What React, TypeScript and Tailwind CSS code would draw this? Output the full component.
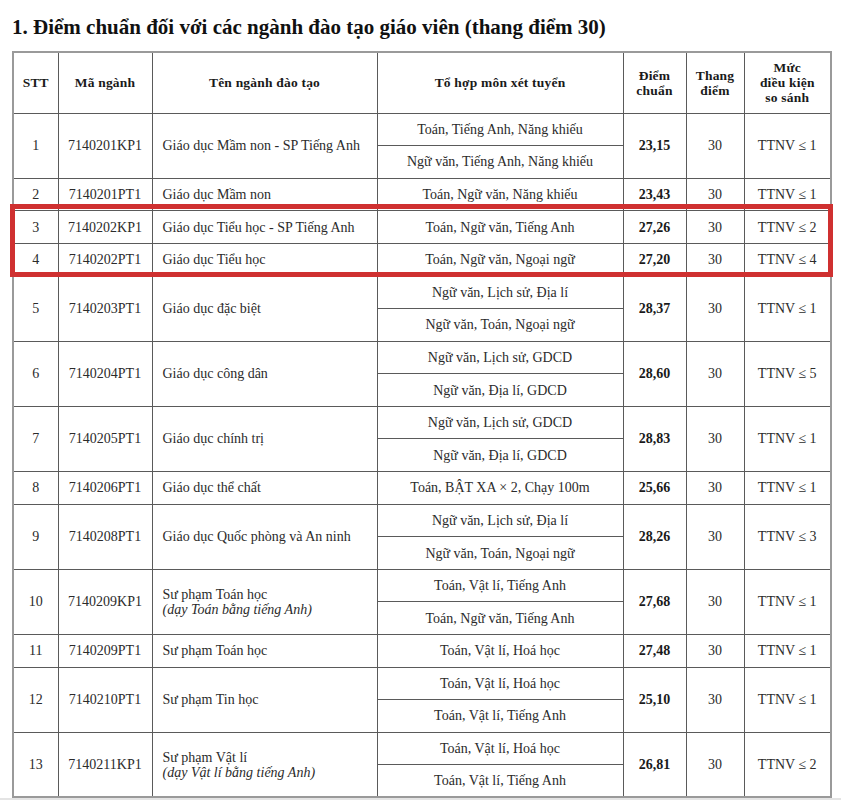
type Row = {
  stt: number;
  code: string;
  name: string;
  note?: string;
  combos: string[];
  score: string;
  cond: string;
};

const rows: Row[] = [
  { stt: 1, code: '7140201KP1', name: 'Giáo dục Mầm non - SP Tiếng Anh', combos: ['Toán, Tiếng Anh, Năng khiếu', 'Ngữ văn, Tiếng Anh, Năng khiếu'], score: '23,15', cond: 'TTNV ≤ 1' },
  { stt: 2, code: '7140201PT1', name: 'Giáo dục Mầm non', combos: ['Toán, Ngữ văn, Năng khiếu'], score: '23,43', cond: 'TTNV ≤ 1' },
  { stt: 3, code: '7140202KP1', name: 'Giáo dục Tiểu học - SP Tiếng Anh', combos: ['Toán, Ngữ văn, Tiếng Anh'], score: '27,26', cond: 'TTNV ≤ 2' },
  { stt: 4, code: '7140202PT1', name: 'Giáo dục Tiểu học', combos: ['Toán, Ngữ văn, Ngoại ngữ'], score: '27,20', cond: 'TTNV ≤ 4' },
  { stt: 5, code: '7140203PT1', name: 'Giáo dục đặc biệt', combos: ['Ngữ văn, Lịch sử, Địa lí', 'Ngữ văn, Toán, Ngoại ngữ'], score: '28,37', cond: 'TTNV ≤ 1' },
  { stt: 6, code: '7140204PT1', name: 'Giáo dục công dân', combos: ['Ngữ văn, Lịch sử, GDCD', 'Ngữ văn, Địa lí, GDCD'], score: '28,60', cond: 'TTNV ≤ 5' },
  { stt: 7, code: '7140205PT1', name: 'Giáo dục chính trị', combos: ['Ngữ văn, Lịch sử, GDCD', 'Ngữ văn, Địa lí, GDCD'], score: '28,83', cond: 'TTNV ≤ 1' },
  { stt: 8, code: '7140206PT1', name: 'Giáo dục thể chất', combos: ['Toán, BẬT XA × 2, Chạy 100m'], score: '25,66', cond: 'TTNV ≤ 1' },
  { stt: 9, code: '7140208PT1', name: 'Giáo dục Quốc phòng và An ninh', combos: ['Ngữ văn, Lịch sử, Địa lí', 'Ngữ văn, Toán, Ngoại ngữ'], score: '28,26', cond: 'TTNV ≤ 3' },
  { stt: 10, code: '7140209KP1', name: 'Sư phạm Toán học', note: '(dạy Toán bằng tiếng Anh)', combos: ['Toán, Vật lí, Tiếng Anh', 'Toán, Ngữ văn, Tiếng Anh'], score: '27,68', cond: 'TTNV ≤ 1' },
  { stt: 11, code: '7140209PT1', name: 'Sư phạm Toán học', combos: ['Toán, Vật lí, Hoá học'], score: '27,48', cond: 'TTNV ≤ 1' },
  { stt: 12, code: '7140210PT1', name: 'Sư phạm Tin học', combos: ['Toán, Vật lí, Hoá học', 'Toán, Vật lí, Tiếng Anh'], score: '25,10', cond: 'TTNV ≤ 1' },
  { stt: 13, code: '7140211KP1', name: 'Sư phạm Vật lí', note: '(dạy Vật lí bằng tiếng Anh)', combos: ['Toán, Vật lí, Hoá học', 'Toán, Vật lí, Tiếng Anh'], score: '26,81', cond: 'TTNV ≤ 2' },
];

const cell = 'border border-[#5a5a5a] align-middle p-0';
const th = 'border border-[#5a5a5a] align-middle p-0 text-center font-bold text-[13.5px] leading-[15px] tracking-[0.2px] text-[#1a1a1a]';

export default function App() {
  return (
    <div
      className="relative w-[841px] h-[809px] bg-white overflow-hidden text-[#2b2b2b]"
      style={{ fontFamily: '"Liberation Serif", "Times New Roman", serif' }}
    >
      <div className="pl-[12px] pt-[15px]">
        <h1 className="text-[21px] leading-[24px] font-bold text-[#111] mb-[12px] whitespace-nowrap">
          1. Điểm chuẩn đối với các ngành đào tạo giáo viên (thang điểm 30)
        </h1>

        <table className="table-fixed border-collapse w-[818px] border-2 border-[#9a9a9a] text-[14px] leading-[15px]">
          <colgroup>
            <col className="w-[45px]" />
            <col className="w-[94px]" />
            <col className="w-[225px]" />
            <col className="w-[246px]" />
            <col className="w-[63px]" />
            <col className="w-[58px]" />
            <col className="w-[87px]" />
          </colgroup>
          <thead>
            <tr className="h-[61px]">
              <th className={th}>STT</th>
              <th className={th}>Mã ngành</th>
              <th className={th}>Tên ngành đào tạo</th>
              <th className={th}>Tổ hợp môn xét tuyển</th>
              <th className={th}>
                Điểm
                <br />
                chuẩn
              </th>
              <th className={th}>
                Thang
                <br />
                điểm
              </th>
              <th className={th}>
                Mức
                <br />
                điều kiện
                <br />
                so sánh
              </th>
            </tr>
          </thead>
          <tbody>
            {rows.map((r) => {
              const span = r.combos.length;
              return r.combos.map((combo, i) => (
                <tr key={`${r.stt}-${i}`} className="h-[32.6px]">
                  {i === 0 && (
                    <>
                      <td rowSpan={span} className={`${cell} text-center`}>{r.stt}</td>
                      <td rowSpan={span} className={`${cell} text-center`}>{r.code}</td>
                      <td rowSpan={span} className={`${cell} pl-[10px] pr-[6px]`}>
                        <div>{r.name}</div>
                        {r.note && <div className="italic">{r.note}</div>}
                      </td>
                    </>
                  )}
                  <td className={`${cell} text-center`}>{combo}</td>
                  {i === 0 && (
                    <>
                      <td rowSpan={span} className={`${cell} text-center font-bold text-[#1a1a1a]`}>{r.score}</td>
                      <td rowSpan={span} className={`${cell} text-center`}>30</td>
                      <td rowSpan={span} className={`${cell} text-center`}>{r.cond}</td>
                    </>
                  )}
                </tr>
              ));
            })}
          </tbody>
        </table>
      </div>

      {/* highlight over rows 3–4 */}
      <div className="absolute left-[10px] top-[204px] w-[823px] h-[73px] border-[5px] border-[#cf3030] pointer-events-none" />

      <div className="absolute left-0 right-0 top-[798px] h-[2px] bg-[#e4e4e4]" />
    </div>
  );
}
